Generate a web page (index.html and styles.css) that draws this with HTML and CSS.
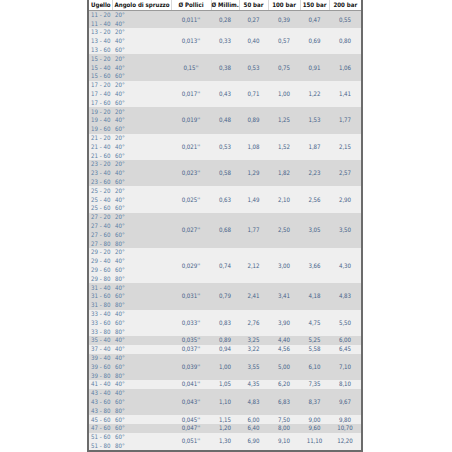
FILE: index.html
```html
<!DOCTYPE html>
<html>
<head>
<meta charset="utf-8">
<link rel="stylesheet" href="styles.css">
</head>
<body>
<div class="wrap">
<table class="tbl">
<colgroup>
<col class="c1"><col class="c2"><col class="c3"><col class="c4"><col class="c5"><col class="c6"><col class="c7"><col class="c8">
</colgroup>
<thead>
<tr class="hd"><th class="l">Ugello</th><th class="l">Angolo di spruzzo</th><th>Ø Pollici</th><th>Ø Millim.</th><th>50 bar</th><th>100 bar</th><th>150 bar</th><th>200 bar</th></tr>
</thead>
<tbody>
<tr class="d"><td class="k">11 - 20</td><td class="a">20°</td><td class="v" rowspan="2">0,011''</td><td class="v" rowspan="2">0,28</td><td class="v" rowspan="2">0,27</td><td class="v" rowspan="2">0,39</td><td class="v" rowspan="2">0,47</td><td class="v" rowspan="2">0,55</td></tr>
<tr class="d"><td class="k">11 - 40</td><td class="a">40°</td></tr>

<tr class="w"><td class="k">13 - 20</td><td class="a">20°</td><td class="v" rowspan="3">0,013''</td><td class="v" rowspan="3">0,33</td><td class="v" rowspan="3">0,40</td><td class="v" rowspan="3">0,57</td><td class="v" rowspan="3">0,69</td><td class="v" rowspan="3">0,80</td></tr>
<tr class="w"><td class="k">13 - 40</td><td class="a">40°</td></tr>
<tr class="w"><td class="k">13 - 60</td><td class="a">60°</td></tr>

<tr class="d"><td class="k">15 - 20</td><td class="a">20°</td><td class="v" rowspan="3">0,15''</td><td class="v" rowspan="3">0,38</td><td class="v" rowspan="3">0,53</td><td class="v" rowspan="3">0,75</td><td class="v" rowspan="3">0,91</td><td class="v" rowspan="3">1,06</td></tr>
<tr class="d"><td class="k">15 - 40</td><td class="a">40°</td></tr>
<tr class="d"><td class="k">15 - 60</td><td class="a">60°</td></tr>

<tr class="w"><td class="k">17 - 20</td><td class="a">20°</td><td class="v" rowspan="3">0,017''</td><td class="v" rowspan="3">0,43</td><td class="v" rowspan="3">0,71</td><td class="v" rowspan="3">1,00</td><td class="v" rowspan="3">1,22</td><td class="v" rowspan="3">1,41</td></tr>
<tr class="w"><td class="k">17 - 40</td><td class="a">40°</td></tr>
<tr class="w"><td class="k">17 - 60</td><td class="a">60°</td></tr>

<tr class="d"><td class="k">19 - 20</td><td class="a">20°</td><td class="v" rowspan="3">0,019''</td><td class="v" rowspan="3">0,48</td><td class="v" rowspan="3">0,89</td><td class="v" rowspan="3">1,25</td><td class="v" rowspan="3">1,53</td><td class="v" rowspan="3">1,77</td></tr>
<tr class="d"><td class="k">19 - 40</td><td class="a">40°</td></tr>
<tr class="d"><td class="k">19 - 60</td><td class="a">60°</td></tr>

<tr class="w"><td class="k">21 - 20</td><td class="a">20°</td><td class="v" rowspan="3">0,021''</td><td class="v" rowspan="3">0,53</td><td class="v" rowspan="3">1,08</td><td class="v" rowspan="3">1,52</td><td class="v" rowspan="3">1,87</td><td class="v" rowspan="3">2,15</td></tr>
<tr class="w"><td class="k">21 - 40</td><td class="a">40°</td></tr>
<tr class="w"><td class="k">21 - 60</td><td class="a">60°</td></tr>

<tr class="d"><td class="k">23 - 20</td><td class="a">20°</td><td class="v" rowspan="3">0,023''</td><td class="v" rowspan="3">0,58</td><td class="v" rowspan="3">1,29</td><td class="v" rowspan="3">1,82</td><td class="v" rowspan="3">2,23</td><td class="v" rowspan="3">2,57</td></tr>
<tr class="d"><td class="k">23 - 40</td><td class="a">40°</td></tr>
<tr class="d"><td class="k">23 - 60</td><td class="a">60°</td></tr>

<tr class="w"><td class="k">25 - 20</td><td class="a">20°</td><td class="v" rowspan="3">0,025''</td><td class="v" rowspan="3">0,63</td><td class="v" rowspan="3">1,49</td><td class="v" rowspan="3">2,10</td><td class="v" rowspan="3">2,56</td><td class="v" rowspan="3">2,90</td></tr>
<tr class="w"><td class="k">25 - 40</td><td class="a">40°</td></tr>
<tr class="w"><td class="k">25 - 60</td><td class="a">60°</td></tr>

<tr class="d"><td class="k">27 - 20</td><td class="a">20°</td><td class="v" rowspan="4">0,027''</td><td class="v" rowspan="4">0,68</td><td class="v" rowspan="4">1,77</td><td class="v" rowspan="4">2,50</td><td class="v" rowspan="4">3,05</td><td class="v" rowspan="4">3,50</td></tr>
<tr class="d"><td class="k">27 - 40</td><td class="a">40°</td></tr>
<tr class="d"><td class="k">27 - 60</td><td class="a">60°</td></tr>
<tr class="d"><td class="k">27 - 80</td><td class="a">80°</td></tr>

<tr class="w"><td class="k">29 - 20</td><td class="a">20°</td><td class="v" rowspan="4">0,029''</td><td class="v" rowspan="4">0,74</td><td class="v" rowspan="4">2,12</td><td class="v" rowspan="4">3,00</td><td class="v" rowspan="4">3,66</td><td class="v" rowspan="4">4,30</td></tr>
<tr class="w"><td class="k">29 - 40</td><td class="a">40°</td></tr>
<tr class="w"><td class="k">29 - 60</td><td class="a">60°</td></tr>
<tr class="w"><td class="k">29 - 80</td><td class="a">80°</td></tr>

<tr class="d"><td class="k">31 - 40</td><td class="a">40°</td><td class="v" rowspan="3">0,031''</td><td class="v" rowspan="3">0,79</td><td class="v" rowspan="3">2,41</td><td class="v" rowspan="3">3,41</td><td class="v" rowspan="3">4,18</td><td class="v" rowspan="3">4,83</td></tr>
<tr class="d"><td class="k">31 - 60</td><td class="a">60°</td></tr>
<tr class="d"><td class="k">31 - 80</td><td class="a">80°</td></tr>

<tr class="w"><td class="k">33 - 40</td><td class="a">40°</td><td class="v" rowspan="3">0,033''</td><td class="v" rowspan="3">0,83</td><td class="v" rowspan="3">2,76</td><td class="v" rowspan="3">3,90</td><td class="v" rowspan="3">4,75</td><td class="v" rowspan="3">5,50</td></tr>
<tr class="w"><td class="k">33 - 60</td><td class="a">60°</td></tr>
<tr class="w"><td class="k">33 - 80</td><td class="a">80°</td></tr>

<tr class="d"><td class="k">35 - 40</td><td class="a">40°</td><td class="v">0,035''</td><td class="v">0,89</td><td class="v">3,25</td><td class="v">4,40</td><td class="v">5,25</td><td class="v">6,00</td></tr>

<tr class="w"><td class="k">37 - 40</td><td class="a">40°</td><td class="v">0,037''</td><td class="v">0,94</td><td class="v">3,22</td><td class="v">4,56</td><td class="v">5,58</td><td class="v">6,45</td></tr>

<tr class="d"><td class="k">39 - 40</td><td class="a">40°</td><td class="v" rowspan="3">0,039''</td><td class="v" rowspan="3">1,00</td><td class="v" rowspan="3">3,55</td><td class="v" rowspan="3">5,00</td><td class="v" rowspan="3">6,10</td><td class="v" rowspan="3">7,10</td></tr>
<tr class="d"><td class="k">39 - 60</td><td class="a">60°</td></tr>
<tr class="d"><td class="k">39 - 80</td><td class="a">80°</td></tr>

<tr class="w"><td class="k">41 - 40</td><td class="a">40°</td><td class="v">0,041''</td><td class="v">1,05</td><td class="v">4,35</td><td class="v">6,20</td><td class="v">7,35</td><td class="v">8,10</td></tr>

<tr class="d"><td class="k">43 - 40</td><td class="a">40°</td><td class="v" rowspan="3">0,043''</td><td class="v" rowspan="3">1,10</td><td class="v" rowspan="3">4,83</td><td class="v" rowspan="3">6,83</td><td class="v" rowspan="3">8,37</td><td class="v" rowspan="3">9,67</td></tr>
<tr class="d"><td class="k">43 - 60</td><td class="a">60°</td></tr>
<tr class="d"><td class="k">43 - 80</td><td class="a">80°</td></tr>

<tr class="w"><td class="k">45 - 60</td><td class="a">60°</td><td class="v">0,045''</td><td class="v">1,15</td><td class="v">6,00</td><td class="v">7,50</td><td class="v">9,00</td><td class="v">9,80</td></tr>

<tr class="d"><td class="k">47 - 60</td><td class="a">60°</td><td class="v">0,047''</td><td class="v">1,20</td><td class="v">6,40</td><td class="v">8,00</td><td class="v">9,60</td><td class="v">10,70</td></tr>

<tr class="w"><td class="k">51 - 60</td><td class="a">60°</td><td class="v" rowspan="2">0,051''</td><td class="v" rowspan="2">1,30</td><td class="v" rowspan="2">6,90</td><td class="v" rowspan="2">9,10</td><td class="v" rowspan="2">11,10</td><td class="v" rowspan="2">12,20</td></tr>
<tr class="w"><td class="k">51 - 80</td><td class="a">80°</td></tr>
</tbody>
</table>
</div>
</body>
</html>
```

FILE: styles.css
```css
html, body {
  margin: 0;
  padding: 0;
  background: #ffffff;
}
.wrap {
  padding-left: 87px;
  padding-top: 0;
}
.tbl {
  border-collapse: collapse;
  table-layout: fixed;
  width: 276px;
  font-family: "DejaVu Sans Condensed", "DejaVu Sans", sans-serif;
  font-size: 6.1px;
  border-left: 2px solid #6b6b6b;
  border-right: 2px solid #6b6b6b;
  border-bottom: 2px solid #6b6b6b;
}
.c1 { width: 24px; }
.c2 { width: 59px; }
.c3 { width: 40px; }
.c4 { width: 28px; }
.c5 { width: 29px; }
.c6 { width: 32px; }
.c7 { width: 29px; }
.c8 { width: 33px; }
.hd th {
  height: 10px;
  padding: 0;
  font-weight: bold;
  color: #111;
  background: #fff;
  text-align: center;
  white-space: nowrap;
  border-left: 1px solid #d8d8d8;
  border-bottom: 1px solid #9a9a9a;
  line-height: 10px;
}
.hd th.l { text-align: left; padding-left: 2px; }
.hd th:first-child { border-left: none; }
tbody tr { height: 8.8px; }
tbody td {
  padding: 0;
  line-height: 8px;
  white-space: nowrap;
  overflow: hidden;
}
tr.d td { background: #d8d8d8; }
tr.w td { background: #efefef; }
td.k { color: #5b7ea5; padding-left: 2px; }
td.a { color: #5b7ea5; padding-left: 3px; }
td.v { color: #47638a; text-align: center; vertical-align: middle; }
```
